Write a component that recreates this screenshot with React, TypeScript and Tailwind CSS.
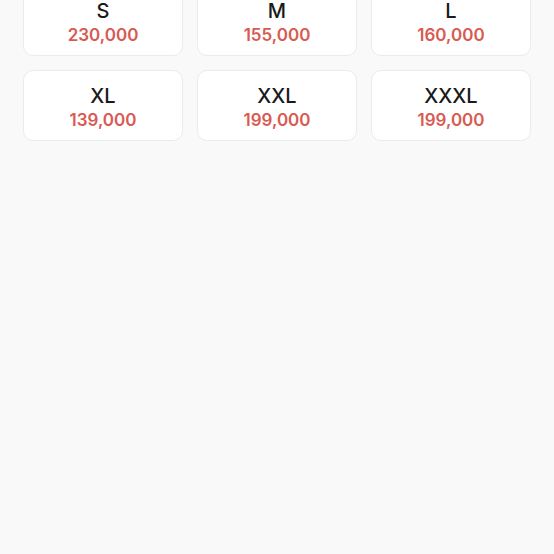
const sizes = [
  { name: "S", price: "230,000" },
  { name: "M", price: "155,000" },
  { name: "L", price: "160,000" },
  { name: "XL", price: "139,000" },
  { name: "XXL", price: "199,000" },
  { name: "XXXL", price: "199,000" },
];

export default function App() {
  return (
    <div className="min-h-[554px] bg-[#f9f9f9] overflow-hidden" style={{ fontFamily: "Inter, 'Noto Sans', sans-serif" }}>
      <div className="-mt-[15px] grid grid-cols-3 gap-[14px] px-[23px]">
        {sizes.map((s) => (
          <div
            key={s.name}
            className="h-[71px] pt-[4px] rounded-[10px] bg-white border border-[#ebebeb] flex flex-col items-center justify-center"
          >
            <span className="text-[20px] leading-[24px] font-medium text-[#1a1a1a]">{s.name}</span>
            <span className="text-[17px] leading-[22px] font-semibold text-[#d85a52] mt-[1px]">{s.price}</span>
          </div>
        ))}
      </div>
    </div>
  );
}
